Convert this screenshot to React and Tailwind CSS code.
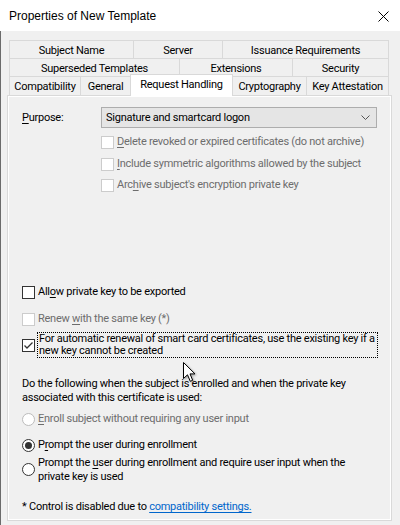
import React from "react";

const Cb = ({ checked, disabled }) => (
  <span
    className={`w-[13px] h-[13px] border shrink-0 flex items-center justify-center bg-white ${
      disabled ? "border-[#cccccc]" : "border-[#333333]"
    }`}
  >
    {checked && (
      <svg width="11" height="11" viewBox="0 0 11 11">
        <path d="M1.5 5.5 L4 8 L9.5 2.5" stroke="#333333" strokeWidth="1.3" fill="none" />
      </svg>
    )}
  </span>
);

const Radio = ({ checked, disabled }) => (
  <span
    className={`w-[13px] h-[13px] rounded-full border shrink-0 flex items-center justify-center bg-white ${
      disabled ? "border-[#bcbcbc]" : "border-[#333333]"
    }`}
  >
    {checked && <span className="w-[7px] h-[7px] rounded-full bg-[#333333]" />}
  </span>
);

const U = ({ children }) => <span className="underline underline-offset-2">{children}</span>;

export default function App() {
  return (
    <div className="relative w-[400px] h-[525px] overflow-hidden bg-[#f0f0f0] text-black font-['Roboto',sans-serif] text-[11px] tracking-[-0.25px] leading-[16px] whitespace-nowrap">
      {/* Title bar */}
      <div className="h-[31px] bg-white flex items-center justify-between pl-[9px] pr-[11px]">
        <span className="font-['Liberation_Sans',sans-serif] text-[12px] tracking-normal leading-[16px] pt-[1px]">
          Properties of New Template
        </span>
        <svg width="11" height="11" viewBox="0 0 11 11" className="mt-[1px]">
          <path d="M0.5 0.5 L10.5 10.5 M10.5 0.5 L0.5 10.5" stroke="#000" strokeWidth="1" />
        </svg>
      </div>

      {/* Body */}
      <div className="h-[494px] shadow-[inset_1px_0_0_#6b6b6b] pt-[9px]">
        {/* Tabs */}
        <div className="ml-[9px] w-[380px] flex flex-col">
          <div className="flex h-[18px]">
            <div className="w-[124px] border-t border-l border-[#d9d9d9] flex items-center justify-center pt-[2px]">Subject Name</div>
            <div className="w-[89px] border-t border-l border-[#d9d9d9] flex items-center justify-center pt-[2px]">Server</div>
            <div className="flex-1 border-t border-l border-r border-[#d9d9d9] flex items-center justify-center pt-[2px]">Issuance Requirements</div>
          </div>
          <div className="flex h-[18px]">
            <div className="w-[170px] border-t border-l border-[#d9d9d9] flex items-center justify-center pt-[2px]">Superseded Templates</div>
            <div className="w-[113px] border-t border-l border-[#d9d9d9] flex items-center justify-center pt-[2px]">Extensions</div>
            <div className="flex-1 border-t border-l border-r border-[#d9d9d9] flex items-center justify-center pt-[2px]">Security</div>
          </div>
          <div className="flex h-[19px] items-start">
            <div className="w-[71px] h-[19px] border-t border-l border-[#d9d9d9] flex items-center justify-center pt-[2px]">Compatibility</div>
            <div className="w-[50px] h-[19px] border-t border-l border-[#d9d9d9] flex items-center justify-center pt-[2px]">General</div>
            <div className="relative z-10 w-[103px] h-[22px] -mt-[2px] bg-white border-t border-l border-r border-[#d9d9d9] flex items-center justify-center pb-[2px]">Request Handling</div>
            <div className="w-[73px] h-[19px] border-t border-[#d9d9d9] flex items-center justify-center pt-[2px]">Cryptography</div>
            <div className="flex-1 h-[19px] border-t border-l border-r border-[#d9d9d9] flex items-center justify-center pt-[2px]">Key Attestation</div>
          </div>
        </div>

        {/* Panel */}
        <div className="ml-[7px] w-[385px] h-[426px] border border-[#d9d9d9] shadow-[inset_1px_1px_0_#ffffff,inset_-1px_-1px_0_#ffffff] pl-[14px] flex flex-col">
          {/* Purpose */}
          <div className="mt-[11px] h-[21px] flex items-center">
            <span className="w-[79px]"><U>P</U>urpose:</span>
            <div className="w-[276px] h-[21px] bg-[#e5e5e5] border border-[#adadad] flex items-center justify-between pl-[4px] pr-[6px]">
              <span>Signature and smartcard logon</span>
              <svg width="9" height="5" viewBox="0 0 9 5">
                <path d="M0.5 0.5 L4.5 4.5 L8.5 0.5" stroke="#555" strokeWidth="1" fill="none" />
              </svg>
            </div>
          </div>
          <div className="mt-[6px] h-[16px] flex items-center gap-[3px] ml-[79px] text-[#6d6d6d]">
            <Cb disabled /> <span><U>D</U>elete revoked or expired certificates (do not archive)</span>
          </div>
          <div className="mt-[6px] h-[16px] flex items-center gap-[3px] ml-[79px] text-[#6d6d6d]">
            <Cb disabled /> <span><U>I</U>nclude symmetric algorithms allowed by the subject</span>
          </div>
          <div className="mt-[5px] h-[16px] flex items-center gap-[3px] ml-[79px] text-[#6d6d6d]">
            <Cb disabled /> <span>Arc<U>h</U>ive subject&apos;s encryption private key</span>
          </div>

          <div className="mt-[91px] h-[16px] flex items-center gap-[3px]">
            <Cb /> <span>All<U>o</U>w private key to be exported</span>
          </div>
          <div className="mt-[11px] h-[16px] flex items-center gap-[3px] text-[#6d6d6d]">
            <Cb disabled /> <span>Renew <U>w</U>ith the same key (*)</span>
          </div>
          <div className="mt-[5px] h-[26px] flex items-center gap-[2px]">
            <Cb checked />
            <div className="w-[341px] h-[26px] border border-dotted border-black leading-[12px] pl-[1px] flex flex-col justify-center">
              <span>For automatic renewal of smart card certificates, use the existing key if a</span>
              <span>new key cannot be created</span>
            </div>
          </div>

          <div className="mt-[19px] leading-[13.5px] flex flex-col">
            <span>Do the following when the subject is enrolled and when the private key</span>
            <span>associated with this certificate is used:</span>
          </div>
          <div className="mt-[7px] h-[16px] flex items-center gap-[3px] text-[#6d6d6d]">
            <Radio disabled /> <span><U>E</U>nroll subject without requiring any user input</span>
          </div>
          <div className="mt-[10px] h-[16px] flex items-center gap-[3px]">
            <Radio checked /> <span>P<U>r</U>ompt the user during enrollment</span>
          </div>
          <div className="mt-[3px] flex items-center gap-[3px]">
            <Radio />
            <div className="leading-[13.5px] flex flex-col">
              <span>Prompt the <U>u</U>ser during enrollment and require user input when the</span>
              <span>private key is used</span>
            </div>
          </div>
          <div className="mt-[16px] h-[16px] flex items-center">
            <span>* Control is disabled due to&nbsp;</span>
            <span className="text-[#0066cc] underline underline-offset-2">compatibility settings.</span>
          </div>
        </div>
      </div>

      {/* Mouse cursor */}
      <svg
        className="absolute left-[183px] top-[362px] drop-shadow-[1px_1px_1px_rgba(0,0,0,0.35)]"
        width="14"
        height="21"
        viewBox="0 0 14 21"
      >
        <path
          d="M0.5 0.5 L0.5 16.5 L4.5 12.8 L7.3 19.3 L9.7 18.3 L7 11.9 L12 11.9 Z"
          fill="#ffffff"
          stroke="#000000"
          strokeWidth="1"
          strokeLinejoin="miter"
        />
      </svg>
    </div>
  );
}
